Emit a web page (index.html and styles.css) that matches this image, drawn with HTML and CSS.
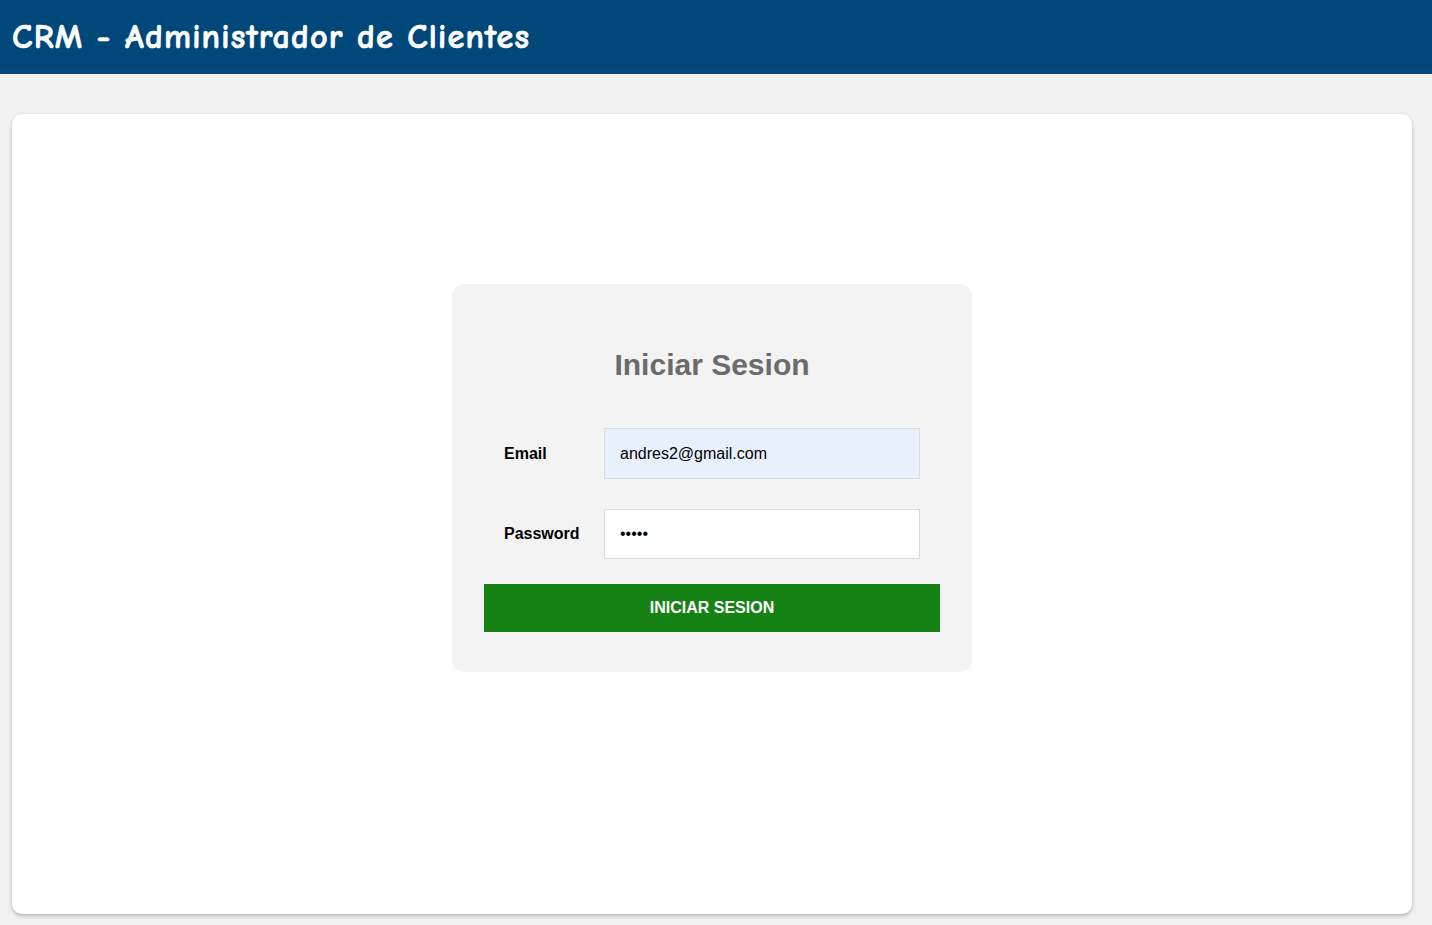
FILE: index.html
```html
<!DOCTYPE html>
<html lang="es">
<head>
<meta charset="utf-8">
<title>CRM - Administrador de Clientes</title>
<link rel="stylesheet" href="styles.css">
</head>
<body>
<header class="topbar">
  <h1 class="brand">CRM - Administrador de Clientes</h1>
</header>
<main class="page">
  <section class="panel">
    <div class="login">
      <h2 class="login-title">Iniciar Sesion</h2>
      <form class="login-form">
        <div class="field">
          <label class="field-label" for="email">Email</label>
          <input class="field-input autofilled" id="email" type="email" value="andres2@gmail.com">
        </div>
        <div class="field">
          <label class="field-label" for="password">Password</label>
          <input class="field-input" id="password" type="password" value="12345">
        </div>
        <button class="submit" type="button">Iniciar Sesion</button>
      </form>
    </div>
  </section>
</main>
</body>
</html>
```
FILE: styles.css
```css
* { box-sizing: border-box; }
html, body { margin: 0; padding: 0; }
body {
  background: #f2f2f2;
  font-family: "Liberation Sans", Arial, sans-serif;
  color: #000;
}
.topbar {
  background: #00477a;
  height: 74px;
  display: flex;
  align-items: center;
  padding: 0 12px;
}
.brand {
  margin: 0;
  color: #fff;
  font-family: "Comic Sans MS", "Comic Neue", "DejaVu Sans", sans-serif;
  font-weight: bold;
  font-size: 34px;
  letter-spacing: 1.2px;
  -webkit-text-stroke: 0.7px #fff;
}
.page {
  padding: 40px 20px 10px 12px;
}
.panel {
  background: #fff;
  border-radius: 10px;
  box-shadow: 0 2px 4px rgba(0,0,0,0.25);
  height: 800px;
  padding-top: 170px;
  display: flex;
  justify-content: center;
  align-items: flex-start;
}
.login {
  width: 520px;
  background: #f3f3f3;
  border-radius: 12px;
  padding: 51px 32px 40px;
}
.login-title {
  margin: 0 0 33px;
  text-align: center;
  font-size: 30px;
  line-height: 60px;
  font-weight: bold;
  color: #6b6b6b;
}
.login-form {
  display: flex;
  flex-direction: column;
}
.field {
  display: flex;
  align-items: center;
  padding: 0 20px;
  margin-bottom: 30px;
}
.field:nth-child(2) { margin-bottom: 25px; }
.field-label {
  width: 100px;
  font-weight: bold;
  font-size: 16px;
}
.field-input {
  width: 316px;
  height: 51px;
  border: 1px solid #dcdcdc;
  background: #fff;
  padding: 0 15px;
  font-family: "Liberation Sans", Arial, sans-serif;
  font-size: 16px;
  color: #000;
  outline: none;
}
#password { height: 50px; }
.autofilled { background: #e8f0fe; }
.submit {
  height: 48px;
  border: none;
  background: #168215;
  color: #fff;
  font-family: "Liberation Sans", Arial, sans-serif;
  font-weight: bold;
  font-size: 16px;
  text-transform: uppercase;
  cursor: pointer;
}
```
